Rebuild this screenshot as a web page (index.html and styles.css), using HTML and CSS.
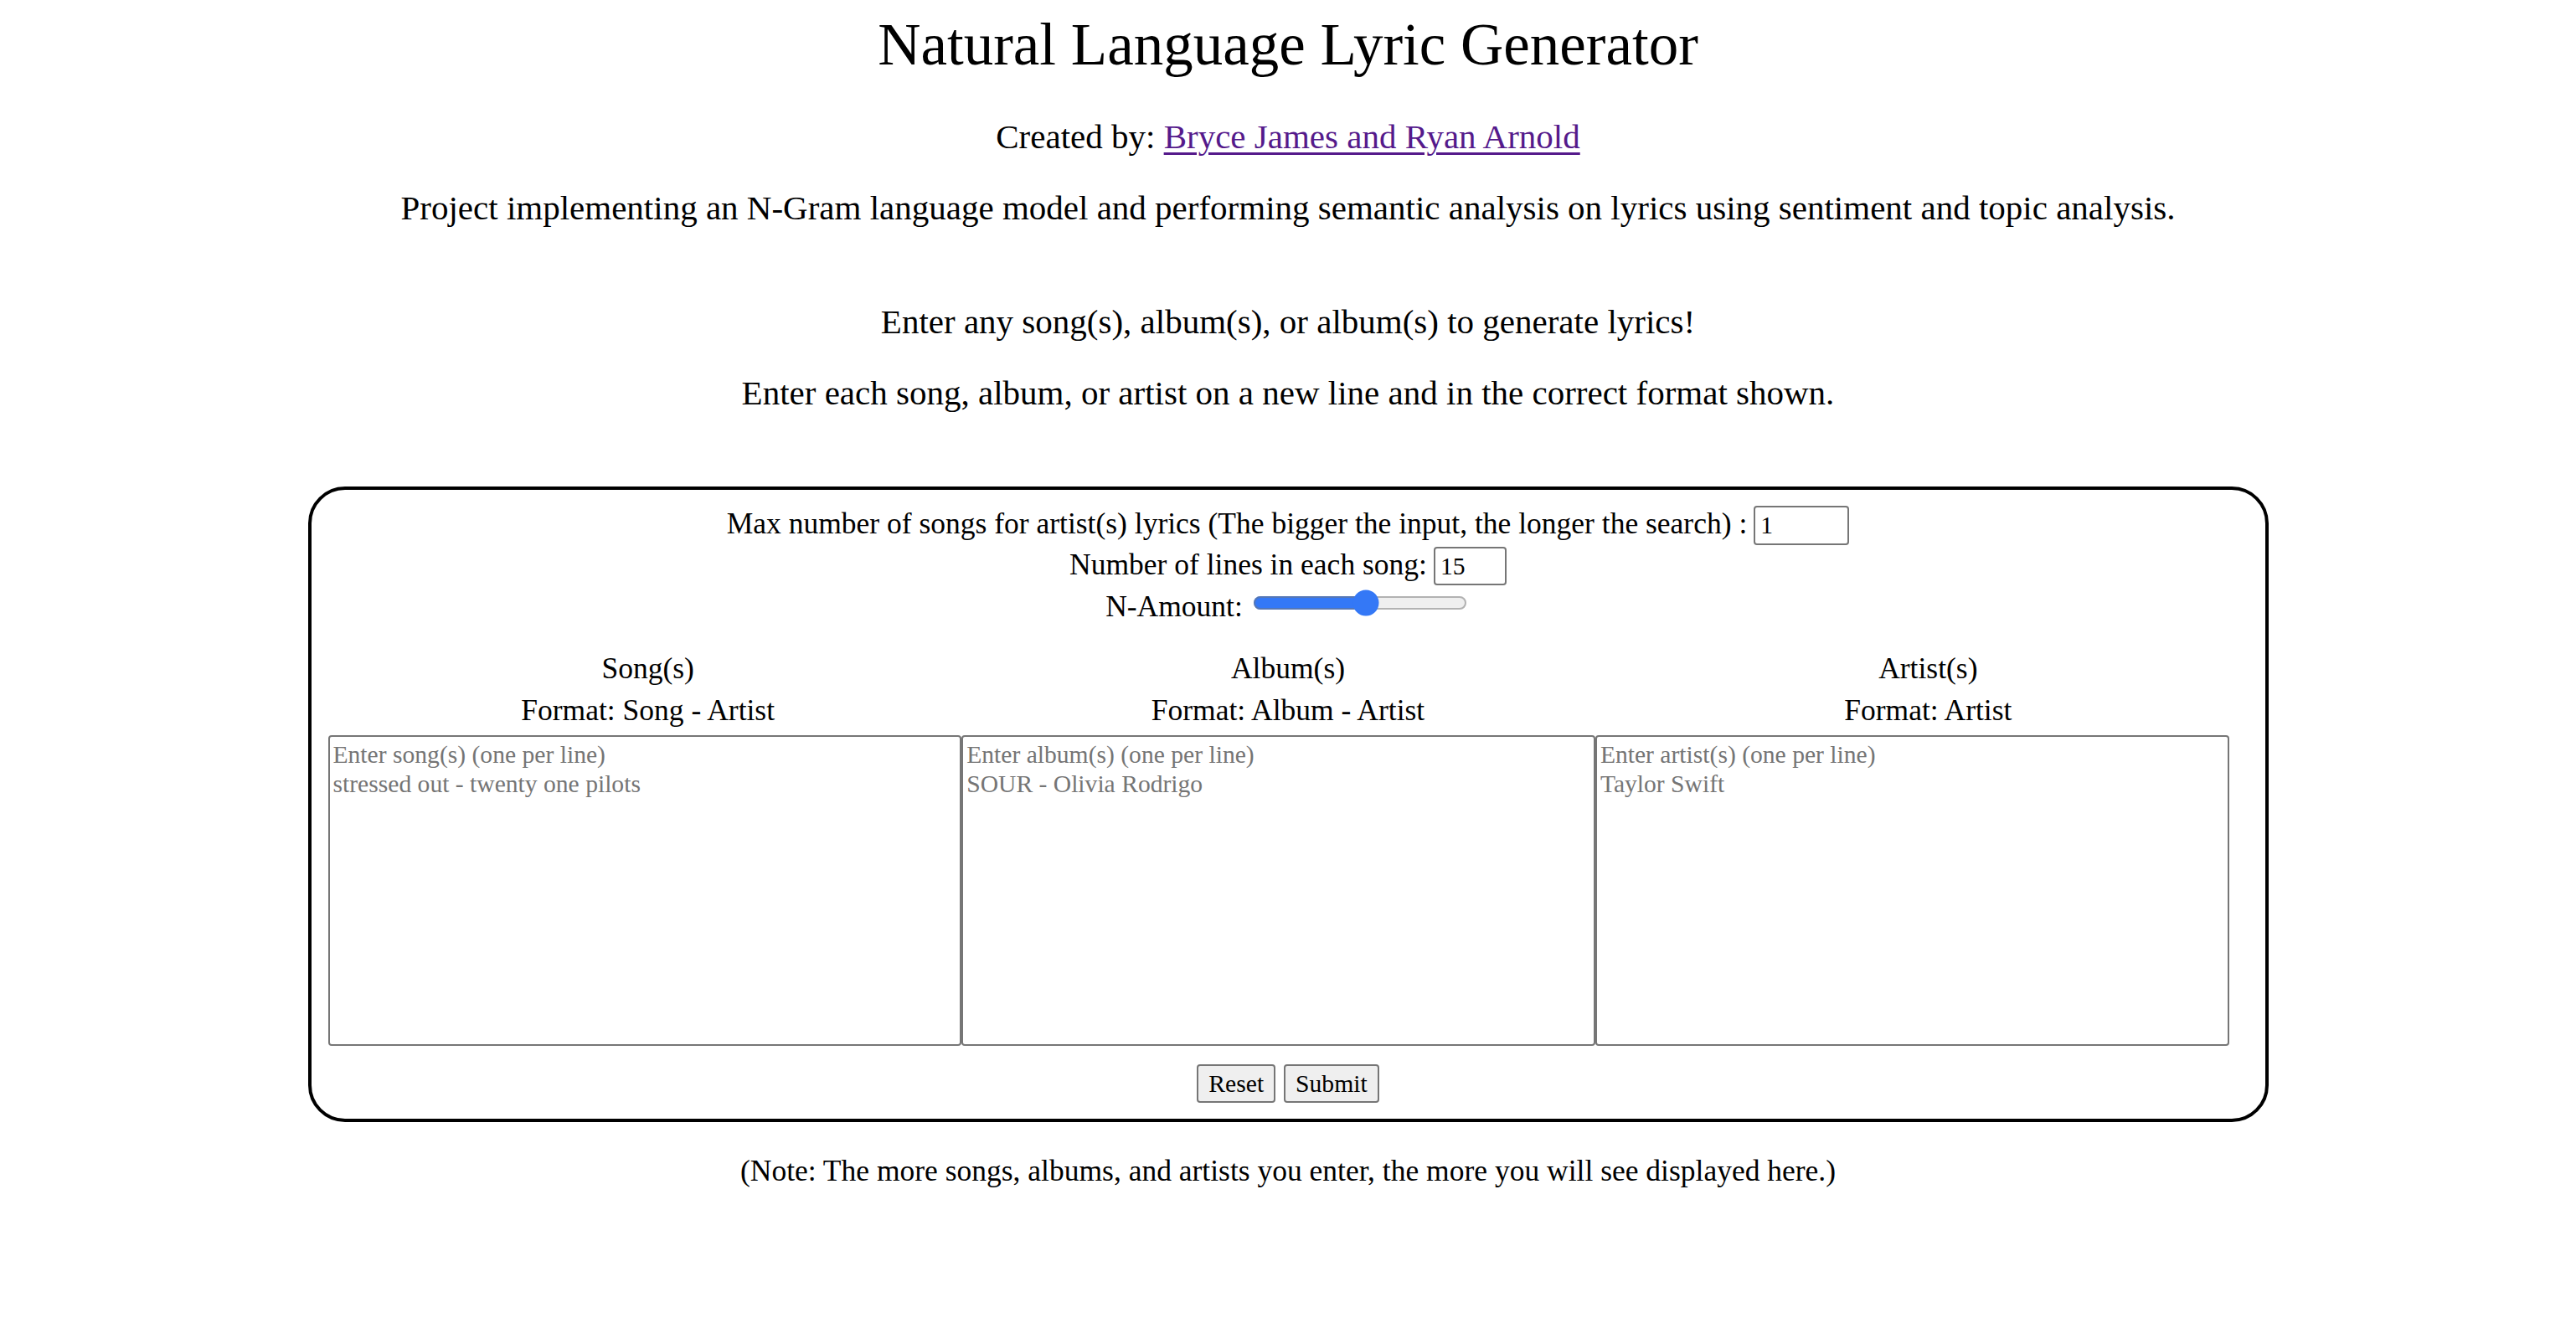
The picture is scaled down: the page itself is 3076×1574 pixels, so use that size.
FILE: index.html
```html
<!DOCTYPE html>
<html lang="en">
<head>
<meta charset="utf-8">
<title>Natural Language Lyric Generator</title>
<link rel="stylesheet" href="styles.css">
</head>
<body>
<header class="intro">
  <h1 class="page-title">Natural Language Lyric Generator</h1>
  <p class="lead">Created by: <a class="authors" href="#">Bryce James and Ryan Arnold</a></p>
  <p class="lead">Project implementing an N-Gram language model and performing semantic analysis on lyrics using sentiment and topic analysis.</p>
  <div class="instructions">
    <p class="lead">Enter any song(s), album(s), or album(s) to generate lyrics!</p>
    <p class="lead">Enter each song, album, or artist on a new line and in the correct format shown.</p>
  </div>
</header>

<form class="panel">
  <div class="settings">
    <div class="setting-row">
      <label class="setting-label" for="maxSongs">Max number of songs for artist(s) lyrics (The bigger the input, the longer the search) :</label>
      <input class="num-input num-input-wide" id="maxSongs" type="text" value="1">
    </div>
    <div class="setting-row setting-row-second">
      <label class="setting-label" for="numLines">Number of lines in each song:</label>
      <input class="num-input num-input-narrow" id="numLines" type="text" value="15">
    </div>
    <div class="setting-row slider-row">
      <label class="setting-label slider-label" for="nAmount">N-Amount:</label>
      <input class="n-slider" id="nAmount" type="range" min="0" max="15" value="8">
    </div>
  </div>

  <div class="column-heads">
    <div class="column-head">
      <h3 class="column-title">Song(s)</h3>
      <h4 class="column-format">Format: Song - Artist</h4>
    </div>
    <div class="column-head">
      <h3 class="column-title">Album(s)</h3>
      <h4 class="column-format">Format: Album - Artist</h4>
    </div>
    <div class="column-head">
      <h3 class="column-title">Artist(s)</h3>
      <h4 class="column-format">Format: Artist</h4>
    </div>
  </div>

  <div class="entries">
    <textarea class="entry" placeholder="Enter song(s) (one per line)&#10;stressed out - twenty one pilots"></textarea>
    <textarea class="entry" placeholder="Enter album(s) (one per line)&#10;SOUR - Olivia Rodrigo"></textarea>
    <textarea class="entry" placeholder="Enter artist(s) (one per line)&#10;Taylor Swift"></textarea>
  </div>

  <div class="actions">
    <button class="btn" type="reset">Reset</button>
    <button class="btn" type="button">Submit</button>
  </div>
</form>

<p class="note">(Note: The more songs, albums, and artists you enter, the more you will see displayed here.)</p>
</body>
</html>
```

FILE: styles.css
```css
html, body {
  background: #ffffff;
}

body {
  margin: 0;
  font-family: "Liberation Serif", "Times New Roman", serif;
  color: #000000;
  text-align: center;
}

.page-title {
  font-size: 71px;
  line-height: 80px;
  font-weight: 400;
  margin: 13px 0 46px;
}

.lead {
  font-size: 41px;
  line-height: 49px;
  margin: 36px 0;
}

.authors {
  color: #551a8b;
  text-decoration: underline;
  text-decoration-thickness: 3px;
  text-underline-offset: 5px;
}

.instructions {
  margin-top: 87px;
}

.panel {
  width: 2341px;
  box-sizing: border-box;
  margin: 87px auto 0;
  border: 4px solid #000000;
  border-radius: 44px;
  padding: 19px 20px;
}

.settings {
  display: flex;
  flex-direction: column;
}

.setting-row {
  display: flex;
  justify-content: center;
  align-items: baseline;
  gap: 8px;
  font-size: 35.5px;
  line-height: 1;
}

.setting-row-second {
  margin-top: 2px;
}

.slider-row {
  align-items: flex-start;
  margin-top: 1px;
}

.slider-label {
  line-height: 40px;
  margin-top: 4px;
}

.num-input {
  box-sizing: border-box;
  height: 47px;
  border: 2px solid #767676;
  border-radius: 4px;
  padding: 0 6px;
  font-family: "Liberation Serif", "Times New Roman", serif;
  font-size: 29.6px;
  color: #000000;
  background: #ffffff;
}

.num-input-wide {
  width: 114px;
}

.num-input-narrow {
  width: 87px;
  height: 46px;
}

.n-slider {
  zoom: 2;
  width: 128px;
  margin: 2px;
  accent-color: #3478f6;
}

.column-heads {
  display: flex;
  margin-top: 29px;
}

.column-head {
  flex: 1 1 0;
}

.column-title,
.column-format {
  font-size: 35.5px;
  line-height: 50px;
  font-weight: 400;
  margin: 0;
}

.entries {
  display: flex;
  justify-content: flex-start;
  margin-top: 5px;
}

.entry {
  display: block;
  box-sizing: border-box;
  width: 33%;
  height: 371px;
  border: 2px solid #767676;
  border-radius: 4px;
  padding: 4px 4px;
  font-family: "Liberation Serif", "Times New Roman", serif;
  font-size: 29.6px;
  line-height: 35px;
  resize: none;
  background: #ffffff;
}

.entry::placeholder {
  color: #757575;
}

.actions {
  display: flex;
  justify-content: center;
  gap: 10px;
  margin-top: 22px;
}

.btn {
  box-sizing: border-box;
  height: 46px;
  padding: 0 12px;
  border: 2px solid #767676;
  border-radius: 4px;
  background: #efefef;
  color: #000000;
  font-family: "Liberation Serif", "Times New Roman", serif;
  font-size: 29.6px;
}

.note {
  font-size: 35.5px;
  line-height: 40px;
  margin: 38px 0 0;
}
```
